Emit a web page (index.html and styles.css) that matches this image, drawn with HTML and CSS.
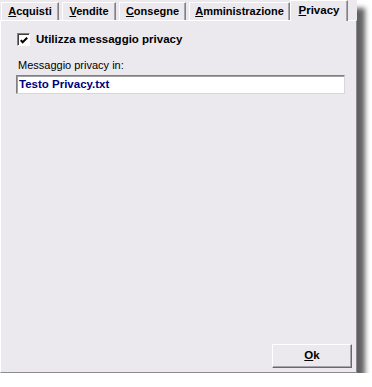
FILE: index.html
```html
<!DOCTYPE html>
<html>
<head>
<meta charset="utf-8">
<link rel="stylesheet" href="styles.css">
</head>
<body>
<div class="window">
  <div class="tabs">
    <div class="tab w-acq"><u>A</u>cquisti</div>
    <div class="tab w-ven"><u>V</u>endite</div>
    <div class="tab w-con"><u>C</u>onsegne</div>
    <div class="tab w-amm"><u>A</u>mministrazione</div>
    <div class="tab active w-pri"><u>P</u>rivacy</div>
  </div>
  <div class="panel">
    <label class="check-row">
      <span class="checkbox"><svg width="11" height="11" viewBox="0 0 11 11"><path d="M2 5 L4 7.5 L9 2.5" fill="none" stroke="#000" stroke-width="2.2"/></svg></span>
      <span class="check-label">Utilizza messaggio privacy</span>
    </label>
    <div class="field-label">Messaggio privacy in:</div>
    <div class="input">Testo Privacy.txt</div>
    <div class="button"><u>O</u>k</div>
  </div>
</div>
</body>
</html>
```

FILE: styles.css
```css
html, body {
  margin: 0;
  padding: 0;
  background: #ffffff;
}
body {
  font-family: "Liberation Sans", Arial, sans-serif;
  font-size: 11px;
  color: #000;
}
.window {
  width: 357px;
  height: 373px;
  display: flex;
  flex-direction: column;
  background: #ECE9EE;
  box-shadow: 8px 8px 5px rgba(0, 0, 0, 0.62);
}
.tabs {
  display: flex;
  align-items: flex-end;
  height: 20px;
  padding-left: 1px;
  background: #ECE9EE;
}
.tab {
  box-sizing: border-box;
  height: 18px;
  border-top: 1px solid #ffffff;
  border-left: 1px solid #ffffff;
  border-right: 1px solid #808080;
  box-shadow: inset -1px 0 #a8a6ac;
  margin-right: 3px;
  font-weight: bold;
  font-size: 11px;
  text-align: center;
  line-height: 16px;
  white-space: nowrap;
  background: #ECE9EE;
}
.tab u {
  text-decoration: underline;
}
.w-acq { width: 58px; }
.w-ven { width: 54px; }
.w-con { width: 67px; }
.w-amm { width: 101px; margin-right: 0; }
.w-pri { width: 58px; }
.tab.active {
  position: relative;
  z-index: 1;
  height: 21px;
  margin-bottom: -1px;
  line-height: 18px;
  font-size: 11.5px;
}
.panel {
  flex: 1;
  display: flex;
  flex-direction: column;
  padding: 12px 4px 4px 15px;
  border-top: 1px solid #ffffff;
  border-left: 1px solid #ffffff;
  border-right: 1px solid #8c8a90;
  border-bottom: 1px solid #8c8a90;
}
.check-row {
  display: flex;
  align-items: center;
  height: 13px;
  margin-left: 1px;
}
.checkbox {
  box-sizing: border-box;
  width: 13px;
  height: 13px;
  background: #ffffff;
  border-top: 1px solid #808080;
  border-left: 1px solid #808080;
  border-right: 1px solid #ffffff;
  border-bottom: 1px solid #ffffff;
  box-shadow: inset 1px 1px #404040;
  display: flex;
  align-items: center;
  justify-content: center;
}
.checkbox svg {
  display: block;
  margin: 1px 0 0 1px;
}
.check-label {
  margin-left: 6px;
  font-weight: bold;
  font-size: 11.5px;
  line-height: 13px;
}
.field-label {
  margin-top: 13px;
  margin-left: 2px;
  line-height: 13px;
}
.input {
  box-sizing: border-box;
  width: 329px;
  height: 19px;
  margin-top: 3px;
  background: #ffffff;
  border-top: 1px solid #808080;
  border-left: 1px solid #808080;
  border-right: 1px solid #d8d6dc;
  border-bottom: 1px solid #d8d6dc;
  box-shadow: inset 1px 1px #a0a0a0;
  padding-left: 2px;
  color: #000080;
  font-weight: bold;
  font-size: 11.5px;
  line-height: 16px;
}
.button {
  box-sizing: border-box;
  align-self: flex-end;
  margin-top: auto;
  width: 80px;
  height: 24px;
  border-top: 1px solid #ffffff;
  border-left: 1px solid #ffffff;
  border-right: 1px solid #6a686e;
  border-bottom: 1px solid #6a686e;
  box-shadow: inset -1px -1px #a8a6ac;
  text-align: center;
  font-weight: bold;
  font-size: 11.5px;
  line-height: 21px;
}
```
